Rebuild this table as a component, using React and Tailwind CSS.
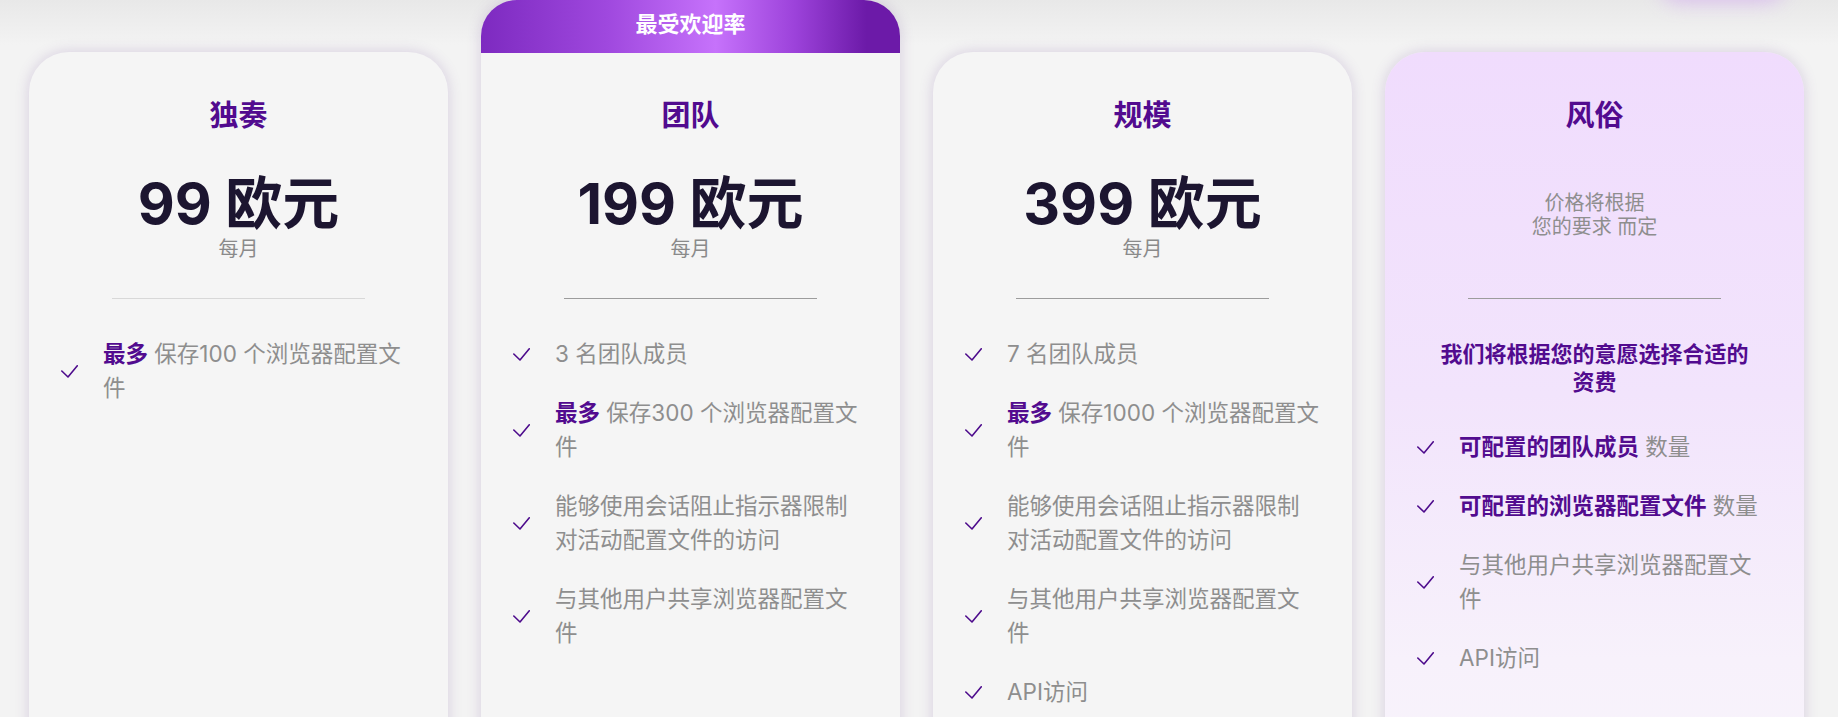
import React from 'react'

const PURPLE = 'text-[#520b8f]'

// ── Check icon ─────────────────────────────────────────────
function Check() {
  return (
    <svg viewBox="0 0 17 13" className="w-[17px] h-[13px] shrink-0" fill="none">
      <polyline points="0.8,6 7,12 16.3,0.8" stroke="#4d0b8c" strokeWidth="1.6" strokeLinecap="round" strokeLinejoin="round" />
    </svg>
  )
}

function Feature({ children }) {
  return (
    <li className="flex items-center">
      <Check />
      <p className="ml-[25px] text-[22.5px] leading-[34px] text-[#8e8e8e] whitespace-nowrap">{children}</p>
    </li>
  )
}

const B = ({ children }) => <span className={`font-bold ${PURPLE}`}>{children}</span>

// ── Card body ──────────────────────────────────────────────
function CardBody({ title, price, note, heading, divider = 'bg-[#9c9c9c]', features }) {
  return (
    <div className="flex flex-col items-center">
      <h2 className={`text-[29px] leading-[36px] font-bold ${PURPLE}`}>{title}</h2>
      <div className="mt-[38px] h-[89px] flex flex-col items-center justify-center">
        {price ? (
          <>
            <p className="text-[57px] leading-[64px] font-bold text-[#1c1530]">{price}</p>
            <p className="mt-px text-[20px] leading-[24px] text-[#8a8a8a]">每月</p>
          </>
        ) : (
          <p className="pb-[4px] text-center text-[20px] leading-[24px] text-[#8e8e8e]">{note}</p>
        )}
      </div>
      <div className={`mt-[37px] h-px w-[253px] ${divider}`} />
      {heading && (
        <p className={`mt-[41px] text-center text-[22px] leading-[28px] font-bold ${PURPLE}`}>{heading}</p>
      )}
      <ul className={`${heading ? 'mt-[34px]' : 'mt-[38px]'} self-stretch pl-[32px] flex flex-col gap-[25px]`}>
        {features.map((f, i) => <Feature key={i}>{f}</Feature>)}
      </ul>
    </div>
  )
}

const CARD_SHADOW = 'shadow-[0_0_14px_rgba(110,70,150,0.22)]'

function Card(props) {
  return (
    <div className={`mt-[52px] w-[419px] h-[760px] shrink-0 rounded-t-[40px] bg-[#f5f5f5] pt-[46px] ${CARD_SHADOW}`}>
      <CardBody {...props} />
    </div>
  )
}

function PopularCard(props) {
  return (
    <div className={`w-[419px] shrink-0 rounded-t-[36px] ${CARD_SHADOW}`}>
      <div className="h-[53px] rounded-t-[36px] bg-[linear-gradient(90deg,#7d2ac0_0%,#9f48de_30%,#c672fb_56%,#9c42da_75%,#6c1aa8_92%)] flex items-center justify-center pb-[4px]">
        <span className="text-white text-[22px] font-bold">最受欢迎率</span>
      </div>
      <div className="h-[760px] bg-[#f5f5f5] pt-[45px]">
        <CardBody {...props} />
      </div>
    </div>
  )
}

function CustomCard(props) {
  return (
    <div className={`mt-[52px] w-[419px] h-[760px] shrink-0 rounded-t-[40px] bg-[linear-gradient(180deg,#f0dcfd_0%,#f2e4fc_45%,#f7f1fb_80%,#f8f4fb_100%)] pt-[46px] ${CARD_SHADOW}`}>
      <CardBody {...props} />
    </div>
  )
}

export default function App() {
  return (
    <div className="relative h-[717px] w-full overflow-hidden bg-[linear-gradient(180deg,#e8e8e8_0px,#f3f3f3_45px,#f3f3f3_100%)] font-['Inter','Noto_Sans_CJK_SC',sans-serif]">
      {/* glow from element above the fold */}
      <div className="absolute left-[1660px] top-[-38px] w-[125px] h-[40px] rounded-full bg-[#d3aaf0] blur-[10px] opacity-70" />

      <div className="relative flex items-start gap-[33px] pl-[29px]">
        <Card
          title="独奏"
          price="99 欧元"
          divider="bg-[#d8d8d8]"
          features={[
            <><B>最多</B> 保存100 个浏览器配置文<br />件</>,
          ]}
        />
        <PopularCard
          title="团队"
          price="199 欧元"
          features={[
            '3 名团队成员',
            <><B>最多</B> 保存300 个浏览器配置文<br />件</>,
            <>能够使用会话阻止指示器限制<br />对活动配置文件的访问</>,
            <>与其他用户共享浏览器配置文<br />件</>,
          ]}
        />
        <Card
          title="规模"
          price="399 欧元"
          features={[
            '7 名团队成员',
            <><B>最多</B> 保存1000 个浏览器配置文<br />件</>,
            <>能够使用会话阻止指示器限制<br />对活动配置文件的访问</>,
            <>与其他用户共享浏览器配置文<br />件</>,
            'API访问',
          ]}
        />
        <CustomCard
          title="风俗"
          note={<>价格将根据<br />您的要求 而定</>}
          heading={<>我们将根据您的意愿选择合适的<br />资费</>}
          features={[
            <><B>可配置的团队成员</B> 数量</>,
            <><B>可配置的浏览器配置文件</B> 数量</>,
            <>与其他用户共享浏览器配置文<br />件</>,
            'API访问',
          ]}
        />
      </div>
    </div>
  )
}
